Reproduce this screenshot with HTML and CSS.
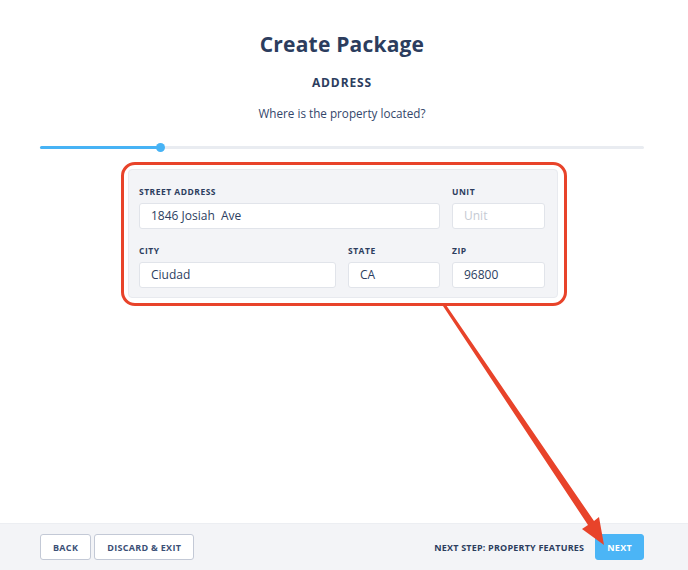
FILE: index.html
```html
<!DOCTYPE html>
<html>
<head>
<meta charset="utf-8">
<link rel="stylesheet" href="styles.css">
</head>
<body>
<div class="page">
  <main class="main">
    <h1 class="title">Create Package</h1>
    <h2 class="step">ADDRESS</h2>
    <p class="question">Where is the property located?</p>
    <div class="progress">
      <div class="progress-fill"><span class="progress-dot"></span></div>
    </div>
    <div class="highlight">
      <div class="card">
        <div class="field span2">
          <label class="label">STREET ADDRESS</label>
          <div class="input">1846 Josiah&nbsp; Ave</div>
        </div>
        <div class="field">
          <label class="label">UNIT</label>
          <div class="input placeholder">Unit</div>
        </div>
        <div class="field">
          <label class="label">CITY</label>
          <div class="input">Ciudad</div>
        </div>
        <div class="field">
          <label class="label">STATE</label>
          <div class="input">CA</div>
        </div>
        <div class="field">
          <label class="label">ZIP</label>
          <div class="input">96800</div>
        </div>
      </div>
    </div>
  </main>
  <footer class="footer">
    <div class="footer-left">
      <button class="btn">BACK</button>
      <button class="btn">DISCARD &amp; EXIT</button>
    </div>
    <div class="footer-right">
      <span class="next-step">NEXT STEP: PROPERTY FEATURES</span>
      <button class="btn btn-primary">NEXT</button>
    </div>
  </footer>
  <svg class="arrow" width="688" height="570" viewBox="0 0 688 570">
    <polygon points="443,306 446,305 594,521 599,517 604,545 582,529 588,525" fill="#e8432a"/>
  </svg>
</div>
</body>
</html>
```
FILE: styles.css
```css
* { box-sizing: border-box; }
html, body { margin: 0; padding: 0; background: #fff; }
body {
  font-family: "Open Sans", "Noto Sans", sans-serif;
  color: #2d3e5f;
}
.page {
  position: relative;
  width: 688px;
  height: 570px;
  display: flex;
  flex-direction: column;
  overflow: hidden;
}
.main {
  flex: 1;
  display: flex;
  flex-direction: column;
  align-items: center;
  padding: 29px 44px 0 40px;
}
.title {
  margin: 0;
  font-size: 21px;
  font-weight: 700;
  line-height: 30px;
  color: #2c3d5e;
  letter-spacing: 0.2px;
}
.step {
  margin: 16px 0 0;
  font-size: 12px;
  font-weight: 700;
  letter-spacing: 0.9px;
  line-height: 16px;
  color: #2c3d5e;
}
.question {
  margin: 14px 0 0;
  font-size: 11.7px;
  line-height: 16px;
  color: #34466a;
}
.progress {
  margin-top: 25px;
  width: 604px;
  height: 3px;
  border-radius: 2px;
  background: #e9ecf1;
  position: relative;
}
.progress-fill {
  width: 121px;
  height: 3px;
  background: #47b3f5;
  border-radius: 2px;
  position: relative;
}
.progress-dot {
  position: absolute;
  right: -4px;
  top: -3px;
  width: 9px;
  height: 9px;
  border-radius: 50%;
  background: #47b3f5;
}
.highlight {
  margin-top: 13px;
  margin-left: 4px;
  padding: 4px 6px 5px 4px;
  border: 3px solid #e8432a;
  border-radius: 14px;
}
.card {
  width: 430px;
  background: #f3f4f7;
  border: 1px solid #e8eaef;
  border-radius: 4px;
  padding: 16px 12px 9px 10px;
  display: grid;
  grid-template-columns: 197px 92px 93px;
  column-gap: 12px;
  row-gap: 16px;
}
.span2 { grid-column: span 2; }
.field { display: flex; flex-direction: column; }
.label {
  font-size: 8.5px;
  font-weight: 700;
  letter-spacing: 0.5px;
  line-height: 12px;
  color: #2c3d5e;
  margin-bottom: 5px;
}
.input {
  height: 26px;
  background: #fff;
  border: 1px solid #e1e4ea;
  border-radius: 3px;
  padding: 0 11px;
  font-size: 12px;
  line-height: 24px;
  color: #2d3e5f;
}
.placeholder { color: #c5cad3; }
.footer {
  height: 47px;
  background: #f3f4f7;
  border-top: 1px solid #eceef2;
  display: flex;
  align-items: center;
  justify-content: space-between;
  padding: 0 44px 0 40px;
}
.footer-left, .footer-right { display: flex; align-items: center; gap: 3px; }
.footer-right { gap: 11px; }
.btn {
  height: 26px;
  padding: 0 12px;
  background: #fff;
  border: 1px solid #c3c9d6;
  border-radius: 3px;
  font-family: "Open Sans", sans-serif;
  font-size: 9px;
  font-weight: 700;
  letter-spacing: 0.3px;
  color: #3b4f76;
}
.btn-primary {
  background: #4bb5f6;
  border-color: #4bb5f6;
  color: #fff;
  padding: 0 11px;
}
.next-step {
  font-size: 9px;
  font-weight: 700;
  letter-spacing: 0.2px;
  color: #2c3d5e;
}
.arrow {
  position: absolute;
  left: 0;
  top: 0;
  pointer-events: none;
}
```
